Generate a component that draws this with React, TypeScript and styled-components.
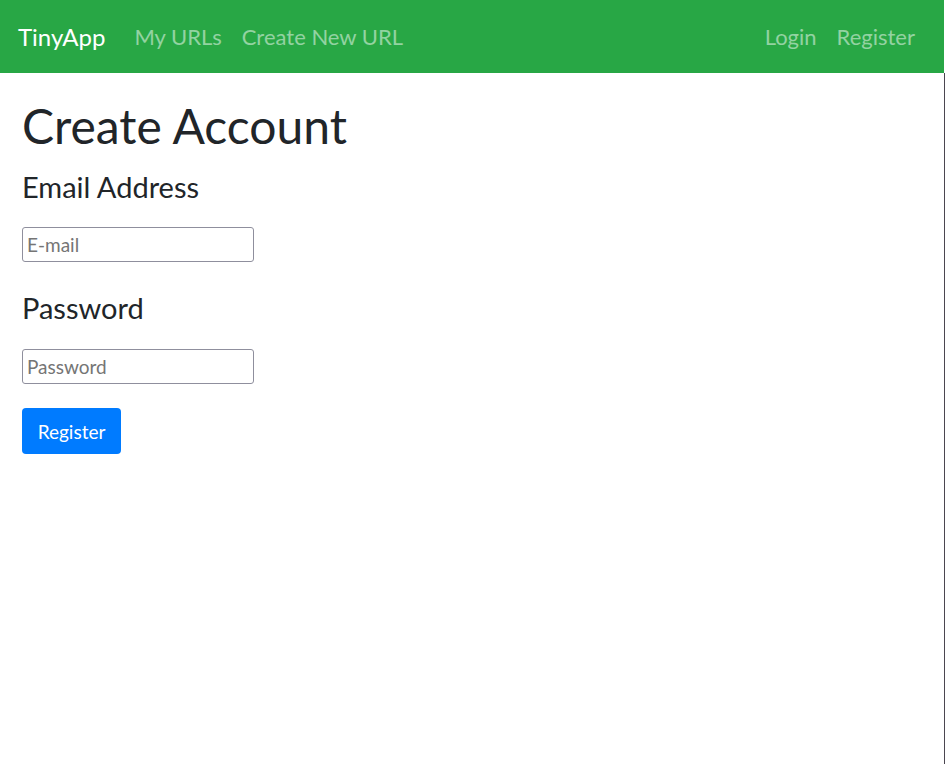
import * as React from 'react';
import styled, {createGlobalStyle} from 'styled-components';

const GlobalStyle = createGlobalStyle`
    html, body {
        margin: 0;
        padding: 0;
        background: #ffffff;
    }

    body {
        font-family: Lato, "Open Sans", sans-serif;
        color: #212529;
    }
`;

/**
 * Page frame
 */
const Page = styled.div`
    display: flex;
    flex-direction: column;
    width: 945px;
    height: 764px;
`;

const NavBar = styled.nav`
    display: flex;
    align-items: center;
    height: 73px;
    width: 944px;
    padding: 0 29px 0 18px;
    box-sizing: border-box;
    background: #28a745;
`;

const Brand = styled.a`
    font-size: 24px;
    color: #ffffff;
    margin-right: 29px;
    text-decoration: none;
`;

const NavGroup = styled.div`
    display: flex;
    gap: 20px;

    &.right {
        margin-left: auto;
    }
`;

const NavLink = styled.a`
    font-size: 22px;
    color: rgba(255, 255, 255, 0.5);
    text-decoration: none;
`;

const Main = styled.main`
    flex: 1;
    padding: 0 22px;
    border-right: 1px solid #4b4650;
`;

const Heading = styled.h1`
    margin: 24px 0 15px;
    font-size: 48px;
    font-weight: 400;
    line-height: 1.2;
`;

const Label = styled.h3`
    margin: 0;
    font-size: 29px;
    font-weight: 400;
    line-height: 1.2;

    &.spaced {
        margin-top: 29px;
    }
`;

const Field = styled.input`
    display: block;
    width: 232px;
    height: 35px;
    margin-top: 23px;
    padding: 0 4px;
    box-sizing: border-box;
    border: 1px solid #8f8f9d;
    border-radius: 3px;
    font-family: inherit;
    font-size: 19px;

    &::placeholder {
        color: #757575;
    }
`;

const Button = styled.button`
    display: block;
    width: 99px;
    height: 46px;
    margin-top: 24px;
    border: none;
    border-radius: 4px;
    background: #007bff;
    color: #ffffff;
    font-family: inherit;
    font-size: 19px;
`;

/**
 * Register page of TinyApp
 */
export default function App() {
    return (
        <Page>
            <GlobalStyle />

            <NavBar>
                <Brand href="#">TinyApp</Brand>
                <NavGroup>
                    <NavLink href="#">My URLs</NavLink>
                    <NavLink href="#">Create New URL</NavLink>
                </NavGroup>
                <NavGroup className="right">
                    <NavLink href="#">Login</NavLink>
                    <NavLink href="#">Register</NavLink>
                </NavGroup>
            </NavBar>

            <Main>
                <Heading>Create Account</Heading>
                <Label>Email Address</Label>
                <Field type="email" placeholder="E-mail" />
                <Label className="spaced">Password</Label>
                <Field type="password" placeholder="Password" />
                <Button>Register</Button>
            </Main>
        </Page>
    );
}
